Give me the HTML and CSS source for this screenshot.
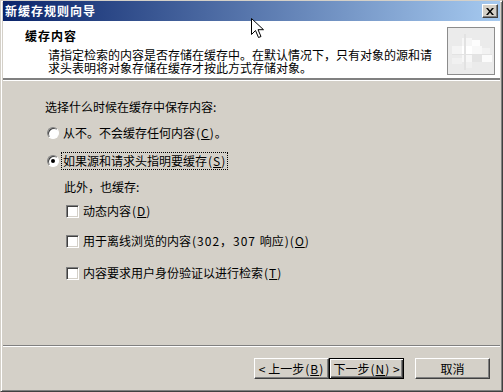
FILE: index.html
```html
<!DOCTYPE html>
<html lang="zh-CN">
<head>
<meta charset="utf-8">
<title>新缓存规则向导</title>
<link rel="stylesheet" href="styles.css">
</head>
<body>
<div class="window">
  <div class="titlebar">
    <span class="title">新缓存规则向导</span>
    <span class="close"><svg width="8" height="7" viewBox="0 0 8 7"><path d="M0 0h2l2 2.5L6 0h2L5 3.5 8 7H6L4 4.5 2 7H0l3-3.5z" fill="#000"/></svg></span>
  </div>
  <div class="header">
    <div class="htext">
      <div class="htitle">缓存内容</div>
      <div class="hdesc">
        <div class="hline">请指定检索的内容是否存储在缓存中。在默认情况下，只有对象的源和请</div>
        <div class="hline">求头表明将对象存储在缓存才按此方式存储对象。</div>
      </div>
    </div>
    <div class="hicon">
      <svg width="46" height="46" viewBox="0 0 46 46">
        <rect width="46" height="46" fill="#ebebeb"/>
        <rect x="14" y="10" width="10" height="8" fill="#f6f6f6"/>
        <rect x="24" y="12" width="8" height="6" fill="#fdfdfd"/>
        <rect x="4" y="18" width="10" height="8" fill="#f4f4f4"/>
        <rect x="14" y="18" width="10" height="8" fill="#ffffff"/>
        <rect x="24" y="18" width="10" height="8" fill="#f8f8f8"/>
        <rect x="34" y="20" width="8" height="6" fill="#f2f2f2"/>
        <rect x="14" y="26" width="10" height="8" fill="#f7f7f7"/>
        <rect x="24" y="26" width="10" height="8" fill="#e4e4e4"/>
        <rect x="34" y="26" width="10" height="8" fill="#fbfbfb"/>
        <rect x="4" y="30" width="10" height="6" fill="#f1f1f1"/>
        <rect x="16" y="34" width="8" height="6" fill="#f0f0f0"/>
        <rect x="16" y="6" width="2" height="36" fill="#e2e2e2"/>
        <rect x="4" y="26" width="40" height="1" fill="#e3e3e3"/>
      </svg>
    </div>
  </div>
  <div class="content">
    <div class="prompt">选择什么时候在缓存中保存内容:</div>
    <div class="opt opt-r1"><span class="radio"></span><span class="label">从不。不会缓存任何内容<span class="mn">(<u>C</u>)</span>。</span></div>
    <div class="opt opt-r2"><span class="radio checked"></span><span class="label focus">如果源和请求头指明要缓存<span class="mn">(<u>S</u>)</span></span></div>
    <div class="sub">此外，也缓存:</div>
    <div class="opt chk chk1"><span class="check"></span><span class="label">动态内容<span class="mn">(<u>D</u>)</span></span></div>
    <div class="opt chk chk2"><span class="check"></span><span class="label">用于离线浏览的内容<span class="mn">(302，307 </span>响应<span class="mn">)(<u>O</u>)</span></span></div>
    <div class="opt chk chk3"><span class="check"></span><span class="label">内容要求用户身份验证以进行检索<span class="mn">(<u>T</u>)</span></span></div>
  </div>
  <div class="footer">
    <button class="btn">&lt; 上一步<span class="mn">(<u>B</u>)</span></button>
    <button class="btn default">下一步<span class="mn">(<u>N</u>)</span> &gt;</button>
    <button class="btn cancel">取消</button>
  </div>
  <svg class="cursor" width="13" height="21" viewBox="0 0 13 21"><path d="M0.5 0.5v16l4-4 3 7 2.5-1-3-6.8h5.5z" fill="#fff" stroke="#000" stroke-width="1"/></svg>
</div>
</body>
</html>
```
FILE: styles.css
```css
* { box-sizing: border-box; }
html, body { margin: 0; padding: 0; }
body {
  width: 503px;
  height: 392px;
  overflow: hidden;
  font-family: "Noto Sans CJK SC", "Liberation Sans", sans-serif;
  font-size: 12px;
  color: #000;
}
.window {
  position: relative;
  width: 503px;
  height: 392px;
  background: #d4d0c8;
  border: 1px solid;
  border-color: #d4d0c8 #404040 #404040 #d4d0c8;
  box-shadow: inset 1px 1px #fff, inset -1px -1px #808080;
  padding: 0 2px 2px 2px;
  display: flex;
  flex-direction: column;
}
.titlebar {
  height: 20px;
  background: linear-gradient(to right, #0a246a, #a6caf0);
  display: flex;
  align-items: center;
  justify-content: space-between;
  padding: 0 2px 0 2px;
  flex: none;
}
.title {
  color: #fff;
  font-weight: bold;
  font-size: 12px;
  letter-spacing: 1px;
  line-height: 14px;
}
.close {
  width: 16px;
  height: 14px;
  background: #d4d0c8;
  border: 1px solid;
  border-color: #fff #404040 #404040 #fff;
  box-shadow: inset -1px -1px #808080;
  display: flex;
  align-items: center;
  justify-content: center;
}
.header {
  flex: none;
  height: 60px;
  background: #fff;
  border-bottom: 1px solid #fff;
  box-shadow: inset 0 -2px #808080;
  display: flex;
  justify-content: space-between;
  padding: 0 5px 0 22px;
}
.htext { padding-top: 8px; }
.htitle {
  font-weight: bold;
  letter-spacing: 1px;
  line-height: 14px;
}
.hdesc {
  margin: 5px 0 0 23px;
}
.hline {
  height: 13px;
  line-height: 13px;
  white-space: nowrap;
}
.hicon {
  margin-top: 6px;
  width: 48px;
  height: 48px;
  border: 1px solid #8c8c8c;
}
.hicon svg { display: block; }
.content {
  flex: 1;
  padding: 19px 0 0 42px;
}
.prompt { line-height: 14px; }
.mn { letter-spacing: 1px; margin-left: 1px; }
.opt {
  display: flex;
  align-items: center;
  height: 14px;
  line-height: 14px;
}
.opt-r1 { margin-top: 12px; }
.opt-r2 { margin-top: 14px; }
.radio {
  width: 12px;
  height: 12px;
  margin: 0 4px 0 2px;
  border-radius: 50%;
  background: #fff;
  border: 1px solid;
  border-color: #808080 #fff #fff #808080;
  box-shadow: inset 1px 1px #404040;
  position: relative;
  flex: none;
}
.radio.checked::after {
  content: "";
  position: absolute;
  left: 3px;
  top: 3px;
  width: 4px;
  height: 4px;
  border-radius: 50%;
  background: #000;
}
.focus { outline: 1px dotted #000; outline-offset: 1px; }
.sub {
  margin: 12px 0 0 19px;
  line-height: 14px;
}
.chk { margin-left: 21px; }
.chk1 { margin-top: 10px; }
.chk2 { margin-top: 16px; }
.chk3 { margin-top: 18px; }
.check {
  width: 13px;
  height: 13px;
  margin-right: 4px;
  background: #fff;
  border: 1px solid;
  border-color: #808080 #fff #fff #808080;
  box-shadow: inset 1px 1px #404040, inset -1px -1px #d4d0c8;
  flex: none;
}
.footer {
  flex: none;
  height: 44px;
  border-top: 1px solid #808080;
  box-shadow: inset 0 1px #fff;
  display: flex;
  justify-content: flex-end;
  padding: 12px 10px 0 0;
}
.btn {
  width: 75px;
  height: 21px;
  font-family: inherit;
  font-size: 12px;
  line-height: 14px;
  padding: 0;
  color: #000;
  background: #d4d0c8;
  border: 1px solid;
  border-color: #fff #404040 #404040 #fff;
  box-shadow: inset -1px -1px #808080;
}
.btn.default {
  border-color: #000;
  box-shadow: inset 1px 1px #fff, inset -1px -1px #404040, inset -2px -2px #808080;
}
.btn.cancel { margin-left: 11px; }
.cursor {
  position: absolute;
  left: 250px;
  top: 17px;
}
```
